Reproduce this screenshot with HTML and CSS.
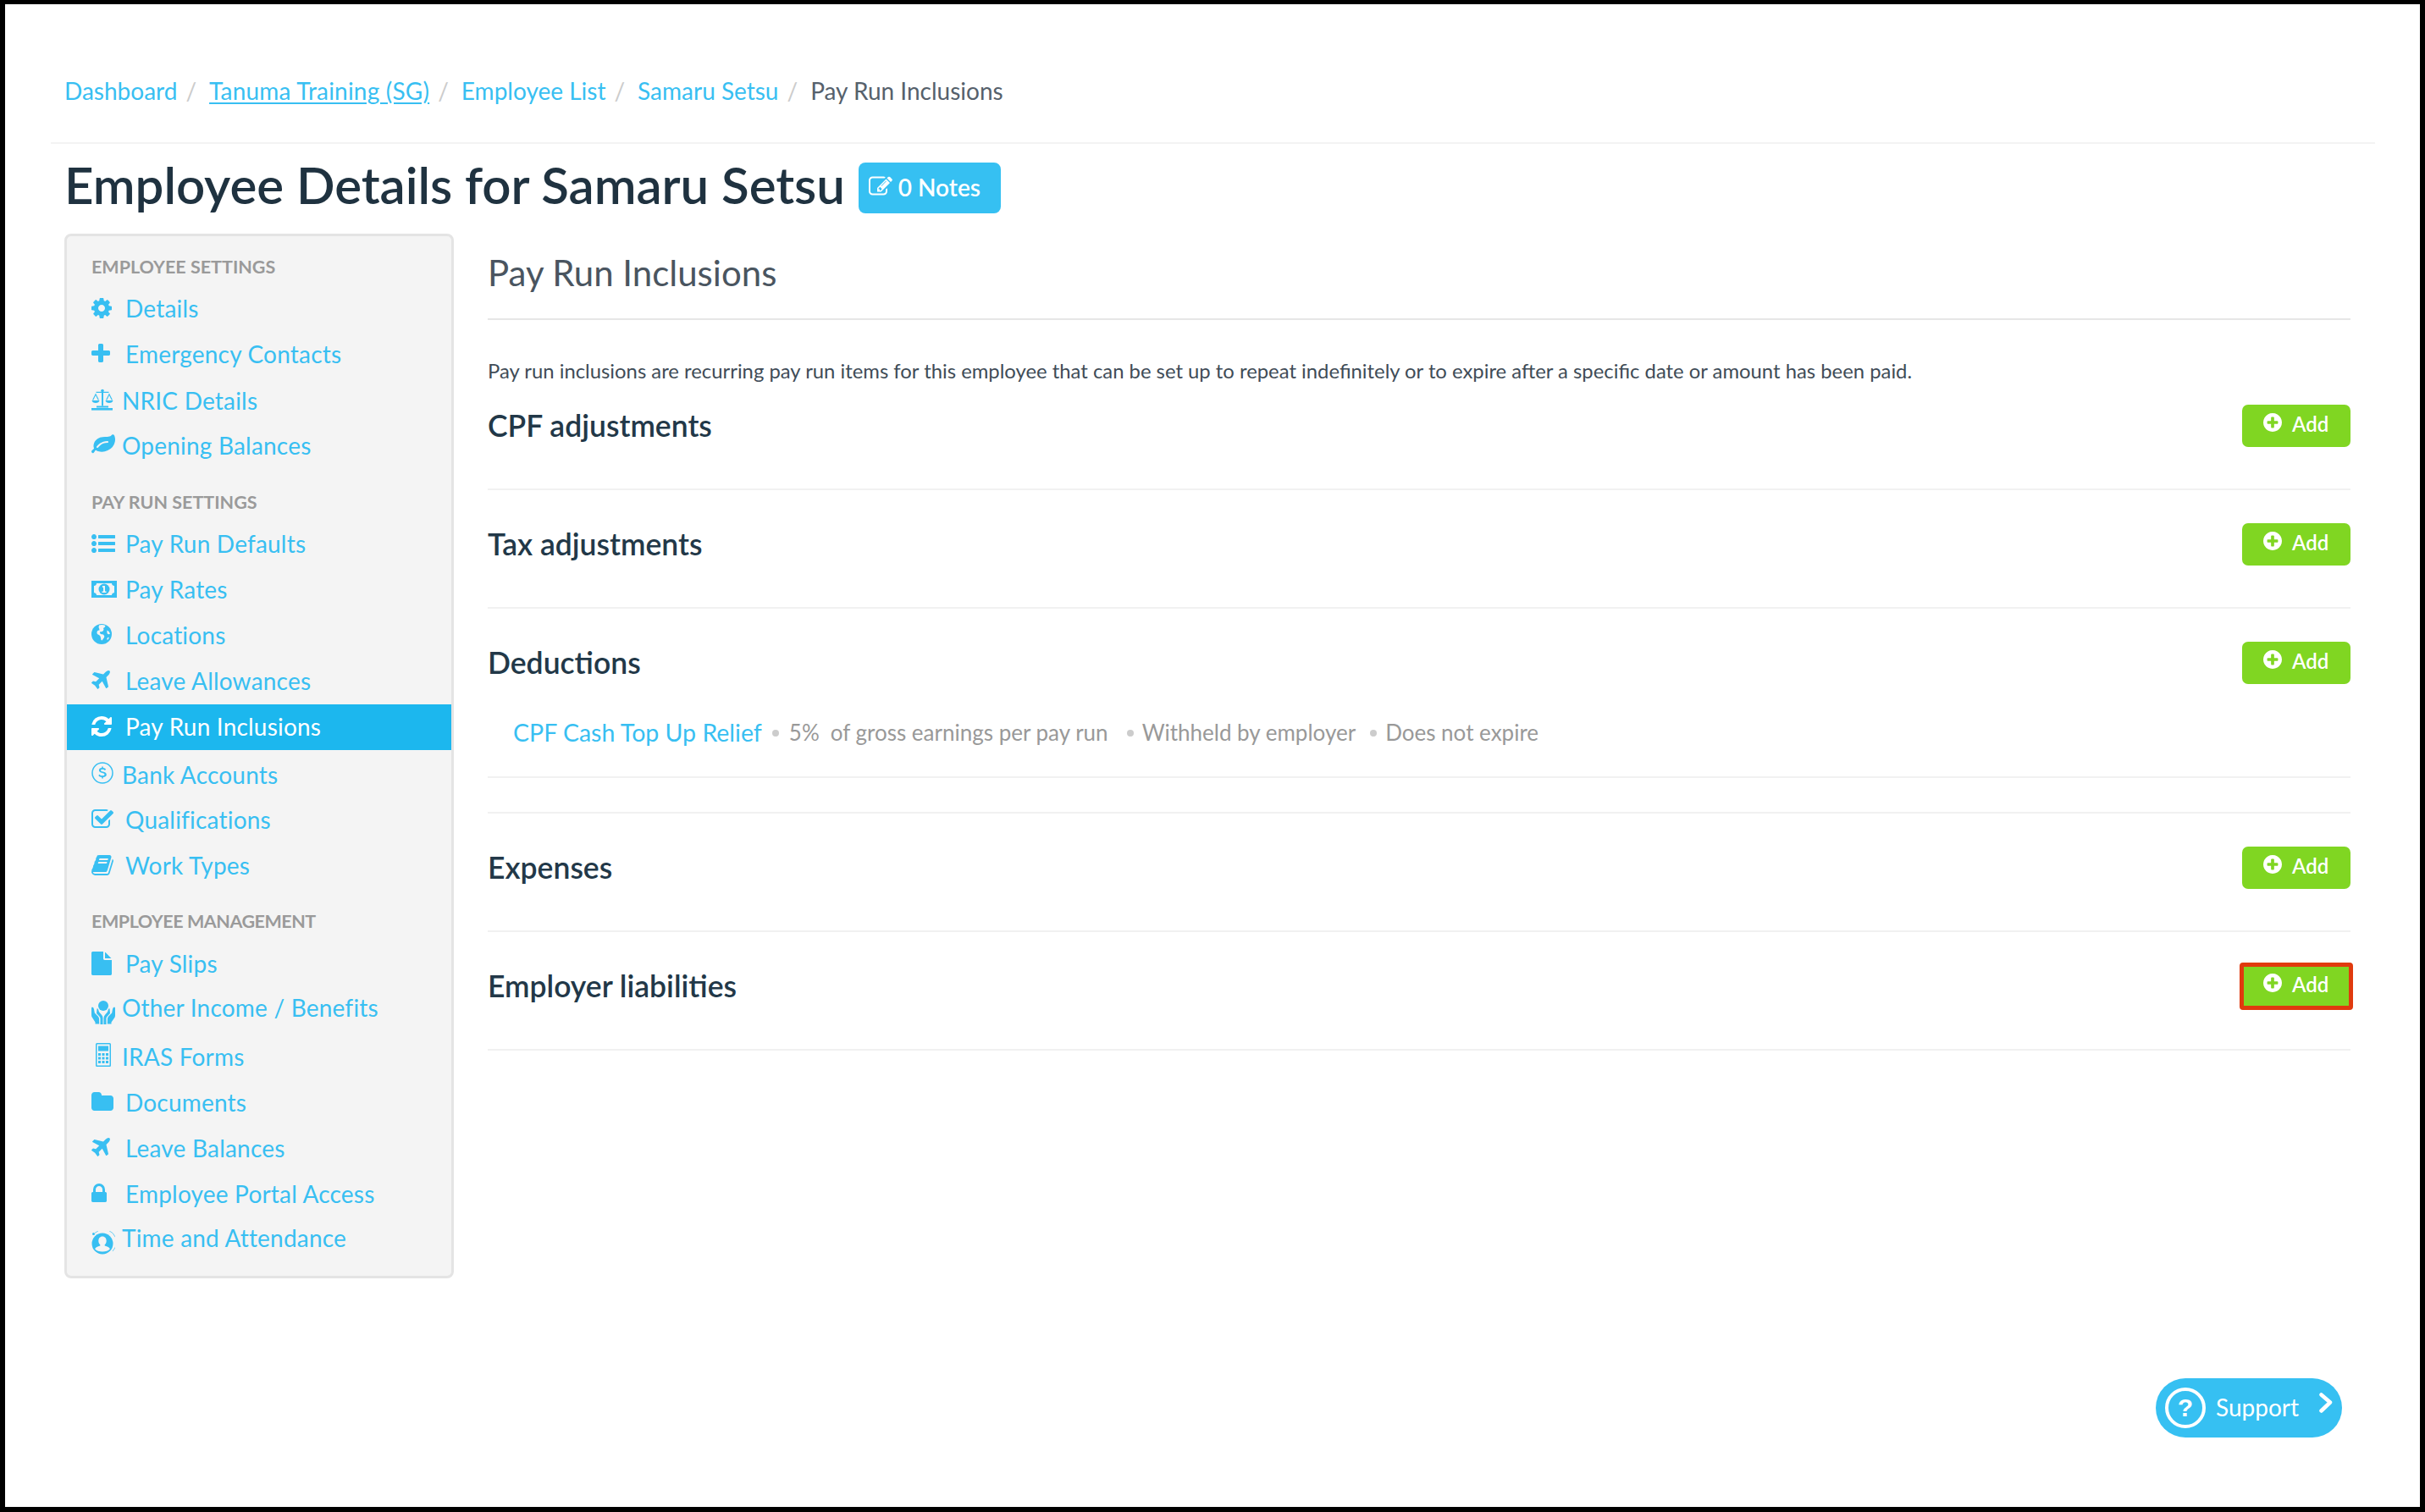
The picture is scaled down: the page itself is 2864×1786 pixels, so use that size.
FILE: index.html
```html
<!DOCTYPE html>
<html lang="en">
<head>
<meta charset="utf-8">
<title>Employee Details for Samaru Setsu</title>
<link rel="stylesheet" href="styles.css">
</head>
<body>
<svg class="sprites" xmlns="http://www.w3.org/2000/svg">
  <symbol id="i-cog" viewBox="128 128 1536 1536"><path d="M1152 896q0-106-75-181t-181-75-181 75-75 181 75 181 181 75 181-75 75-181zm512-109v222q0 12-8 23t-20 13l-185 28q-19 54-39 91 35 50 107 138 10 12 10 25t-9 23q-27 37-99 108t-94 71q-12 0-26-9l-138-108q-44 23-91 38-16 136-29 186-7 28-36 28h-222q-14 0-24.500-8.500t-11.500-21.500l-28-184q-49-16-90-37l-141 107q-10 9-25 9-14 0-25-11-126-114-165-168-7-10-7-23 0-12 8-23 15-21 51-66.500t54-70.500q-27-50-41-99l-183-27q-13-2-21-12.500t-8-23.500v-222q0-12 8-23t19-13l186-28q14-46 39-92-40-57-107-138-10-12-10-24 0-10 9-23 26-36 98.500-107.500t94.500-71.500q13 0 26 10l138 107q44-23 91-38 16-136 29-186 7-28 36-28h222q14 0 24.500 8.500t11.500 21.500l28 184q49 16 90 37l142-107q9-9 24-9 13 0 25 10 129 119 165 170 7 8 7 22 0 12-8 23-15 21-51 66.500t-54 70.500q26 50 41 98l183 28q13 2 21 12.500t8 23.500z"/></symbol>
  <symbol id="i-plus" viewBox="192 128 1408 1408"><path d="M1600 736v192q0 40-28 68t-68 28h-416v416q0 40-28 68t-68 28h-192q-40 0-68-28t-28-68v-416h-416q-40 0-68-28t-28-68v-192q0-40 28-68t68-28h416v-416q0-40 28-68t68-28h192q40 0 68 28t28 68v416h416q40 0 68 28t28 68z"/></symbol>
  <symbol id="i-leaf" viewBox="0 128 1792 1536"><path d="M1280 704q0-26-19-45t-45-19q-172 0-318 49.500t-259.500 134-235.500 219.500q-19 21-19 45 0 26 19 45t45 19q24 0 45-19 27-24 74-71t67-66q137-124 268.500-176t313.500-52q26 0 45-19t19-45zm512-198q0 95-20 193-46 224-184.500 383t-357.500 268q-214 108-438 108-148 0-286-47-15-5-88-42t-96-37q-16 0-39.500 32t-45 70-52.500 76-60 38q-30 0-51-11t-31-24-27-42q-2-4-6-11t-5.500-10-3-9.500-1.500-13.500q0-35 31-73.500t68-65.500 68-56 31-48q0-4-14-38t-16-44q-9-51-9-104 0-115 43.500-220t119-184.500 170.500-139 204-95.500q55-18 145-25.500t179.500-9 178.500-6 163.500-24 113.500-56.500l29.500-29.500 29.500-28 27-20 36.500-16 43.500-4.500q39 0 70.500 46t47.500 112 24 124 8 96z"/></symbol>
  <symbol id="i-list" viewBox="0 192 1792 1408"><path d="M384 1408q0 80-56 136t-136 56-136-56-56-136 56-136 136-56 136 56 56 136zm0-512q0 80-56 136t-136 56-136-56-56-136 56-136 136-56 136 56 56 136zm1408 416v192q0 13-9.500 22.500t-22.500 9.500h-1216q-13 0-22.500-9.500t-9.500-22.500v-192q0-13 9.500-22.500t22.500-9.500h1216q13 0 22.500 9.500t9.500 22.500zm-1408-928q0 80-56 136t-136 56-136-56-56-136 56-136 136-56 136 56 56 136zm1408 416v192q0 13-9.500 22.500t-22.500 9.500h-1216q-13 0-22.500-9.500t-9.500-22.500v-192q0-13 9.500-22.500t22.500-9.500h1216q13 0 22.500 9.500t9.500 22.500zm0-512v192q0 13-9.500 22.500t-22.500 9.500h-1216q-13 0-22.500-9.500t-9.500-22.500v-192q0-13 9.500-22.500t22.500-9.500h1216q13 0 22.500 9.500t9.500 22.500z"/></symbol>
  <symbol id="i-plane" viewBox="0 128 1408 1408"><path d="M1376 160q44 52 12 148t-108 172l-161 161 160 696q5 19-12 33l-128 96q-7 6-19 6-4 0-7-1-15-3-21-16l-279-508-259 259 53 194q5 17-8 31l-96 96q-9 9-23 9h-2q-15-2-24-13l-189-252-252-189q-11-7-13-23-1-13 9-25l96-97q9-9 23-9 6 0 8 1l194 53 259-259-508-279q-14-8-17-24-2-16 9-27l128-128q14-13 30-8l665 159 160-160q76-76 172-108t148 12z"/></symbol>
  <symbol id="i-refresh" viewBox="128 128 1536 1536"><path d="M1639 1056q0 5-1 7-64 268-268 434.500t-478 166.500q-146 0-282.500-55t-243.500-157l-129 129q-19 19-45 19t-45-19-19-45v-448q0-26 19-45t45-19h448q26 0 45 19t19 45-19 45l-137 137q71 66 161 102t187 36q134 0 250-65t186-179q11-17 53-117 8-23 30-23h192q13 0 22.500 9.500t9.500 22.500zm25-800v448q0 26-19 45t-45 19h-448q-26 0-45-19t-19-45 19-45l138-138q-148-137-349-137-134 0-250 65t-186 179q-11 17-53 117-8 23-30 23h-199q-13 0-22.500-9.500t-9.500-22.500v-7q65-268 270-434.500t480-166.500q146 0 284 55.500t245 156.500l130-129q19-19 45-19t45 19 19 45z"/></symbol>
  <symbol id="i-check" viewBox="64 128 1664 1408"><path d="M1472 930v318q0 119-84.500 203.500t-203.500 84.500h-832q-119 0-203.500-84.500t-84.500-203.500v-832q0-119 84.500-203.500t203.500-84.500h832q63 0 117 25 15 7 18 23 3 17-9 29l-49 49q-10 10-23 10-3 0-9-2-23-6-45-6h-832q-66 0-113 47t-47 113v832q0 66 47 113t113 47h832q66 0 113-47t47-113v-254q0-13 9-22l64-64q10-10 23-10 6 0 12 3 20 8 20 29zm231-489l-814 814q-24 24-57 24t-57-24l-430-430q-24-24-24-57t24-57l110-110q24-24 57-24t57 24l263 263 647-647q24-24 57-24t57 24l110 110q24 24 24 57t-24 57z"/></symbol>
  <symbol id="i-book" viewBox="60 128 1672 1536"><path d="M1703 478q40 57 18 129l-275 906q-19 64-76.500 107.500t-122.500 43.500h-923q-77 0-148.500-53.500t-99.500-131.500q-24-67-2-127 0-4 3-27t4-37q1-8-3-21.500t-3-19.500q2-11 8-21t16.500-23.500 16.500-23.500q23-38 45-91.500t30-91.500q3-10 .5-30t-.5-28q3-11 17-28t17-23q21-36 42-92t25-90q1-9-2.500-32t.5-28q4-13 22-30.500t22-22.500q19-26 42.500-84.500t27.500-96.500q1-8-3-25.500t-2-26.500q2-8 9-18t18-23 17-21q8-12 16.500-30.500t15-35 16-36 19.500-32 26.500-23.500 36-11.500 47.500 5.500l-1 3q38-9 51-9h761q74 0 114 56t18 130l-274 906q-36 119-71.500 153.500t-128.500 34.500h-869q-27 0-38 15-11 16-1 43 24 70 144 70h923q29 0 56-15.500t35-41.500l300-987q7-22 5-57 38 15 59 43zm-1064 2q-4 13 2 22.500t20 9.500h608q13 0 25.500-9.500t16.500-22.500l21-64q4-13-2-22.500t-20-9.500h-608q-13 0-25.500 9.500t-16.500 22.500zm-83 256q-4 13 2 22.500t20 9.500h608q13 0 25.500-9.500t16.500-22.500l21-64q4-13-2-22.500t-20-9.500h-608q-13 0-25.500 9.500t-16.500 22.500z"/></symbol>
  <symbol id="i-file" viewBox="0 0 1536 1792"><path d="M1024 512v-472q22 14 36 28l408 408q14 14 28 36h-472zm-128 32q0 40 28 68t68 28h544v1056q0 40-28 68t-68 28h-1344q-40 0-68-28t-28-68v-1600q0-40 28-68t68-28h800v544z"/></symbol>
  <symbol id="i-folder" viewBox="64 128 1664 1408"><path d="M1728 608v704q0 92-66 158t-158 66h-1216q-92 0-158-66t-66-158v-960q0-92 66-158t158-66h320q92 0 158 66t66 158v32h672q92 0 158 66t66 158z"/></symbol>
  <symbol id="i-lock" viewBox="320 128 1152 1408"><path d="M640 768h512v-192q0-106-75-181t-181-75-181 75-75 181v192zm832 96v576q0 40-28 68t-68 28h-960q-40 0-68-28t-28-68v-576q0-40 28-68t68-28h32v-192q0-184 132-316t316-132 316 132 132 316v192h32q40 0 68 28t28 68z"/></symbol>
  <symbol id="i-plus-circle" viewBox="128 128 1536 1536"><path d="M1344 960v-128q0-26-19-45t-45-19h-256v-256q0-26-19-45t-45-19h-128q-26 0-45 19t-19 45v256h-256q-26 0-45 19t-19 45v128q0 26 19 45t45 19h256v256q0 26 19 45t45 19h128q26 0 45-19t19-45v-256h256q26 0 45-19t19-45zm320-64q0 209-103 385.500t-279.500 279.500-385.500 103-385.500-103-279.500-279.500-103-385.500 103-385.500 279.500-279.500 385.500-103 385.500 103 279.500 279.500 103 385.500z"/></symbol>
  <symbol id="i-edit" viewBox="0 128 1792 1408"><path d="M888 1184l116-116-152-152-116 116v56h96v96h56zm440-720q-16-16-33 1l-350 350q-17 17-1 33t33-1l350-350q17-17 1-33zm80 594v190q0 119-84.500 203.500t-203.500 84.500h-832q-119 0-203.500-84.500t-84.500-203.500v-832q0-119 84.500-203.500t203.500-84.500h832q63 0 117 25 15 7 18 23 3 17-9 29l-49 49q-14 14-32 8-23-6-45-6h-832q-66 0-113 47t-47 113v832q0 66 47 113t113 47h832q66 0 113-47t47-113v-126q0-13 9-22l64-64q15-15 35-7t20 29zm-96-738l288 288-672 672h-288v-288zm444 132l-92 92-288-288 92-92q28-28 68-28t68 28l152 152q28 28 28 68t-28 68z"/></symbol>
</svg>

<div class="frame">
  <div class="page">
    <nav class="crumbs">
      <a class="crumb">Dashboard</a><span class="sep">/</span>
      <a class="crumb crumb-u">Tanuma Training (SG)</a><span class="sep">/</span>
      <a class="crumb">Employee List</a><span class="sep">/</span>
      <a class="crumb">Samaru Setsu</a><span class="sep">/</span>
      <span class="crumb-current">Pay Run Inclusions</span>
    </nav>
    <header class="title-row">
      <h1 class="title">Employee Details for Samaru Setsu</h1>
      <a class="notes-btn"><svg class="notes-ic"><use href="#i-edit"/></svg>0 Notes</a>
    </header>
    <div class="columns">
      <aside class="sidebar">
        <h4 class="nav-head">Employee Settings</h4>
        <a class="nav-item"><span class="slot"><svg class="ic w24 h24 up1"><use href="#i-cog"/></svg></span>Details</a>
        <a class="nav-item"><span class="slot"><svg class="ic w22 h22 up3"><use href="#i-plus"/></svg></span>Emergency Contacts</a>
        <a class="nav-item nudge1"><span class="slot slot-n"><svg class="ic w26 h26 up2" viewBox="0 0 26 26"><path d="M12 2h2v1.800h6.500v1.200h-6.500v15.500h-2v-15.500h-6.500v-1.200h6.500z"/><circle cx="13" cy="2.500" r="1.800"/><path d="M1 13.500l4-8 4 8h-1.300l-2.700-5.400-2.700 5.400zM.5 14h9q-.6 3-4.500 3t-4.500-3zM17 13.500l4-8 4 8h-1.300l-2.700-5.400-2.700 5.400zM16.500 14h9q-.6 3-4.500 3t-4.500-3z"/><rect x="6" y="20.500" width="14" height="2"/><rect x="0" y="23" width="25" height="2.600"/></svg></span>NRIC Details</a>
        <a class="nav-item"><span class="slot slot-n"><svg class="ic w28 h24 up2"><use href="#i-leaf"/></svg></span>Opening Balances</a>
        <h4 class="nav-head nav-head-next">Pay Run Settings</h4>
        <a class="nav-item"><span class="slot"><svg class="ic w28 h22 up1"><use href="#i-list"/></svg></span>Pay Run Defaults</a>
        <a class="nav-item"><span class="slot"><svg class="ic w30 h20 up1" viewBox="0 0 30 20"><path fill-rule="evenodd" d="M0 0h30v20H0zM6 3q0 2.500-3 3v8q3 .5 3 3h18q0-2.500 3-3V6q-3-.5-3-3z"/><circle cx="15" cy="10" r="6.500"/><path class="ic-cut" d="M13 6h3v6.500h1.500V14h-5v-1.500H14V8h-1z"/></svg></span>Pay Rates</a>
        <a class="nav-item"><span class="slot"><svg class="ic w24 h24 up2" viewBox="0 0 24 24"><circle cx="12" cy="12" r="12"/><path class="ic-cut" d="M9 1.500q4-1 7.500.5-.5 2.500-2.500 3 1 1.500 0 3t-3.500 1q-1.500 1.500.5 3l3 .5q2 1.500 1 3.500l-2.500 3.500q-1.500-.5-1.500-3t-2-3.500q-3-1-2.500-3.500t3-2q0-2-1-3.500zM18.500 7.500q2.500 1 3.500 4-1 1-2.500.5t-1-4.500zM20 15.500q1 .5.500 1.500l-1.500 2q-1-.5-.5-2z"/></svg></span>Locations</a>
        <a class="nav-item"><span class="slot"><svg class="ic w22 h22 up3"><use href="#i-plane"/></svg></span>Leave Allowances</a>
        <a class="nav-item nav-active"><span class="slot"><svg class="ic w24 h24 up1"><use href="#i-refresh"/></svg></span>Pay Run Inclusions</a>
        <a class="nav-item nav-tall"><span class="slot slot-n"><svg class="ic w26 h26 up5" viewBox="0 0 26 26"><circle cx="13" cy="13" r="12" fill="none" stroke="currentColor" stroke-width="1.500"/><path d="M12.200 5.500h1.600v1.600q2.400.2 3.400 1.700l-1.300 1.200q-1-1.200-2.900-1.200-2 0-2 1.200t2.400 1.600q4.400.8 4.400 3.400 0 2.600-4 3v1.500h-1.600v-1.500q-2.800-.2-4-2l1.300-1.200q1.200 1.500 3.400 1.500 2.700 0 2.700-1.600 0-1.300-2.800-1.800-3.900-.7-3.900-3.200 0-2.300 3.300-2.700z"/></svg></span>Bank Accounts</a>
        <a class="nav-item"><span class="slot"><svg class="ic w26 h22 up2"><use href="#i-check"/></svg></span>Qualifications</a>
        <a class="nav-item"><span class="slot"><svg class="ic w26 h24 up1"><use href="#i-book"/></svg></span>Work Types</a>
        <h4 class="nav-head nav-head-mgmt">Employee Management</h4>
        <a class="nav-item"><span class="slot"><svg class="ic w24 h28 up1"><use href="#i-file"/></svg></span>Pay Slips</a>
        <a class="nav-item nav-other"><span class="slot slot-n"><svg class="ic w28 h28 down3" viewBox="0 0 28 28"><circle cx="14" cy="6" r="6"/><path d="M1 7.500q1.500 0 2 2.500l.8 4.500 4 4q1 1 1.200 2.500l.2 6.500H4.500v-2L1 20q-1-1-1-3V9q0-1.500 1-1.500zM27 7.500q-1.500 0-2 2.500l-.8 4.500-4 4q-1 1-1.200 2.500l-.2 6.500h4.700v-2l3.500-5q1-1 1-3V9q0-1.500-1-1.500z"/><path d="M6.500 9.500q1-.5 1.500.8l1 3 3 3.500q1.500 1.700 1.500 4V28h-3v-7q0-1.500-1.200-2.500L6 15z"/><path d="M21.500 9.500q-1-.5-1.500.8l-1 3-3 3.500q-1.500 1.700-1.500 4V28h3v-7q0-1.500 1.200-2.500L22 15z"/></svg></span>Other Income / Benefits</a>
        <a class="nav-item"><span class="slot slot-n"><svg class="ic w18 h28 calc up6" viewBox="0 0 18 28"><path fill-rule="evenodd" d="M1.500 0h15A1.500 1.500 0 0 1 18 1.500v25a1.500 1.500 0 0 1-1.500 1.500h-15A1.500 1.500 0 0 1 0 26.500v-25A1.500 1.500 0 0 1 1.500 0zM1.500 1.500v25h15v-25z"/><path d="M3 3.500h12v6H3zM3 12h3v3H3zM7.500 12h3v3h-3zM12 12h3v3h-3zM3 16.500h3v3H3zM7.500 16.500h3v3h-3zM12 16.500h3v3h-3zM3 21h3v3H3zM7.500 21h3v3h-3zM12 21h3v3h-3z"/></svg></span>IRAS Forms</a>
        <a class="nav-item"><span class="slot"><svg class="ic w26 h22 up2"><use href="#i-folder"/></svg></span>Documents</a>
        <a class="nav-item"><span class="slot"><svg class="ic w22 h22 up3"><use href="#i-plane"/></svg></span>Leave Balances</a>
        <a class="nav-item"><span class="slot"><svg class="ic w18 h22 up2"><use href="#i-lock"/></svg></span>Employee Portal Access</a>
        <a class="nav-item nav-time"><span class="slot slot-n"><svg class="ic w28 h28 down6" viewBox="0 0 28 28"><path d="M4 2.500A14 14 0 0 1 25 24" fill="none" stroke="currentColor" stroke-width=".7"/><circle cx="2.500" cy="3.500" r="1.500"/><circle cx="13" cy="15" r="12.500"/><path class="ic-cut" d="M13 6.500c3 0 4.700 2.300 4.700 5.200 0 2-.9 3.700-2 4.500v1.300q5 1.300 6.200 3.800-3 3.200-8.900 3.200t-8.900-3.200q1.200-2.500 6.200-3.800v-1.300c-1.100-.8-2-2.500-2-4.500 0-2.900 1.700-5.200 4.700-5.200z"/></svg></span>Time and Attendance</a>
      </aside>
      <main class="content">
        <h2 class="content-title">Pay Run Inclusions</h2>
        <p class="intro">Pay run inclusions are recurring pay run items for this employee that can be set up to repeat indefinitely or to expire after a specific date or amount has been paid.</p>

        <section class="section section-first">
          <div class="section-head"><h3 class="section-title">CPF adjustments</h3><a class="add-btn"><svg class="add-ic"><use href="#i-plus-circle"/></svg>Add</a></div>
        </section>
        <section class="section">
          <div class="section-head"><h3 class="section-title">Tax adjustments</h3><a class="add-btn"><svg class="add-ic"><use href="#i-plus-circle"/></svg>Add</a></div>
        </section>
        <section class="section section-list">
          <div class="section-head"><h3 class="section-title">Deductions</h3><a class="add-btn"><svg class="add-ic"><use href="#i-plus-circle"/></svg>Add</a></div>
          <div class="inclusion">
            <a class="inclusion-name">CPF Cash Top Up Relief</a>
            <span class="dot dot-a"></span><span class="meta meta-pct">5%</span><span class="meta">of gross earnings per pay run</span>
            <span class="dot dot-b"></span><span class="meta">Withheld by employer</span>
            <span class="dot dot-c"></span><span class="meta">Does not expire</span>
          </div>
        </section>
        <div class="section-gap"></div>
        <section class="section">
          <div class="section-head"><h3 class="section-title">Expenses</h3><a class="add-btn"><svg class="add-ic"><use href="#i-plus-circle"/></svg>Add</a></div>
        </section>
        <section class="section">
          <div class="section-head"><h3 class="section-title">Employer liabilities</h3><a class="add-btn add-flagged"><svg class="add-ic"><use href="#i-plus-circle"/></svg>Add</a></div>
        </section>
      </main>
    </div>
  </div>
  <a class="support">
    <span class="support-q">?</span>
    <span class="support-label">Support</span>
    <svg class="support-chev" viewBox="0 0 16 24"><path d="M2.500 2.500 13 11.500 2.500 21.500" fill="none" stroke="#fff" stroke-width="4.500" stroke-linecap="round" stroke-linejoin="round"/></svg>
  </a>
</div>
</body>
</html>
```

FILE: styles.css
```css
* { box-sizing: border-box; }
html, body { margin: 0; padding: 0; background: #000; }
body { font-family: Lato, "Open Sans", "Liberation Sans", sans-serif; color: #1f3240; }
a { text-decoration: none; color: #38bff2; }
h1, h2, h3, h4, p { margin: 0; }

.sprites { position: absolute; width: 0; height: 0; overflow: hidden; }

.frame {
  position: relative;
  width: 2864px;
  height: 1786px;
  border-style: solid;
  border-color: #000;
  border-width: 5px 6px 6px 6px;
  background: #fff;
  overflow: hidden;
}
.page { padding: 1px 53px 0 54px; }

/* breadcrumb */
.crumbs {
  display: flex;
  align-items: center;
  height: 164px;
  padding: 82px 0 42px 16px;
  border-bottom: 2px solid #f3f3f3;
  font-size: 28px;
  line-height: 40px;
}
.crumb { color: #38bff2; }
.crumb-u { text-decoration: underline; text-underline-offset: 3px; letter-spacing: .2px; }
.sep { color: #ccc; margin: 0 15px 0 10px; }
.crumb-current { color: #56616c; }

/* title */
.title-row { display: flex; align-items: center; height: 60px; margin: 22px 0 24px 16px; }
.title {
  padding-bottom: 8px;
  font-size: 60px;
  line-height: 60px;
  font-weight: 600;
  letter-spacing: -.05px;
  color: #1f3240;
  white-space: nowrap;
}
.notes-btn {
  display: flex;
  align-items: center;
  height: 60px;
  width: 168px;
  margin-left: 16px;
  padding: 0 0 2px 12px;
  border-radius: 8px;
  background: #36c0f2;
  color: #fff;
  font-size: 28px;
  font-weight: 600;
}
.notes-ic { width: 28px; height: 23px; margin: 0 7px 3px 0; fill: #fff; }

/* layout */
.columns { display: flex; align-items: flex-start; padding-left: 16px; }

/* sidebar */
.sidebar {
  width: 460px;
  flex: none;
  padding: 21px 0 15px;
  background: #f4f4f4;
  border: 3px solid #e4e4e4;
  border-radius: 8px;
}
.nav-head {
  height: 30px;
  margin: 0 0 8px 29px;
  font-size: 21.5px;
  line-height: 30px;
  font-weight: 700;
  color: #9a9a9a;
  text-transform: uppercase;
}
.nav-head-next { margin-top: 24px; }
.nav-head-mgmt { margin-top: 23px; margin-bottom: 9px; letter-spacing: -.45px; }

.nav-item {
  display: flex;
  align-items: center;
  height: 54px;
  padding: 0 0 2px 29px;
  font-size: 28px;
  letter-spacing: .2px;
  color: #38bff2;
  white-space: nowrap;
}
.nav-active { background: #1cb7ee; color: #fff; }
.nudge1 { padding-top: 2px; }
.nav-tall { height: 56px; padding-top: 4px; }
.nav-other { height: 56px; padding-bottom: 8px; }
.nav-time { padding-bottom: 6px; }

.slot { display: flex; align-items: center; flex: none; width: 40px; height: 100%; margin-top: 2px; }
.slot-n { width: 36px; }
.ic { flex: none; fill: currentColor; }
.w18 { width: 18px; } .w22 { width: 22px; } .w24 { width: 24px; } .w26 { width: 26px; }
.w28 { width: 28px; } .w30 { width: 30px; }
.h20 { height: 20px; } .h22 { height: 22px; } .h24 { height: 24px; } .h26 { height: 26px; } .h28 { height: 28px; }
.up1 { margin-bottom: 2px; }
.up2 { margin-bottom: 4px; }
.up3 { margin-bottom: 5px; }
.up5 { margin-bottom: 6px; }
.up6 { margin-bottom: 6px; }
.down3 { margin-top: 10px; }
.down6 { margin-top: 10px; }
.calc { margin-left: 5px; }
.ic-cut { fill: #f4f4f4; }

/* main column */
.content { flex: 1; margin-left: 40px; padding-right: 29px; }
.content-title {
  height: 102px;
  padding-top: 21px;
  border-bottom: 2px solid #e6e6e6;
  font-size: 42px;
  line-height: 50px;
  font-weight: 400;
  color: #4a5560;
}
.intro { margin-top: 45px; font-size: 23.85px; line-height: 30px; color: #3f4c57; white-space: nowrap; }

.section { padding: 39px 0 49px; border-bottom: 2px solid #f1f1f1; }
.section-first { padding-top: 25px; }
.section-list { padding-bottom: 0; }
.section-gap { height: 42px; border-bottom: 2px solid #f1f1f1; }
.section-head { display: flex; align-items: center; justify-content: space-between; height: 50px; }
.section-title { font-size: 35.5px; line-height: 50px; font-weight: 600; color: #223848; }

.add-btn {
  display: flex;
  align-items: center;
  width: 128px;
  height: 50px;
  padding: 0 0 6px 25px;
  border-radius: 7px;
  background: #80d622;
  color: #fff;
  font-size: 24px;
  font-weight: 600;
}
.add-ic { width: 22px; height: 22px; margin: 0 12px 2px 0; fill: #fff; }
.add-flagged { border-radius: 1px; outline: 5px solid #e03a0e; outline-offset: -2px; }

.inclusion {
  display: flex;
  align-items: center;
  height: 109px;
  padding: 5px 0 0 30px;
  font-size: 26px;
  white-space: nowrap;
}
.inclusion-name { color: #38bff2; font-size: 28.5px; }
.meta { color: #999; }
.meta-pct { margin-right: 13px; }
.dot { width: 8px; height: 8px; margin-top: 2px; border-radius: 50%; background: #ccc; }
.dot-a { margin-left: 12px; margin-right: 12px; }
.dot-b { margin-left: 22px; margin-right: 10px; }
.dot-c { margin-left: 17px; margin-right: 10px; }

/* floating support */
.support {
  position: absolute;
  left: 2540px;
  top: 1623px;
  display: flex;
  align-items: center;
  width: 220px;
  height: 70px;
  padding-left: 11px;
  border-radius: 35px;
  background: #36c0f2;
  color: #fff;
}
.support-q {
  display: flex;
  align-items: center;
  justify-content: center;
  width: 48px;
  height: 48px;
  margin-right: 12px;
  border: 4px solid #fff;
  border-radius: 50%;
  font-family: "Liberation Sans", sans-serif;
  font-size: 30px;
  font-weight: 700;
}
.support-label { padding-bottom: 2px; font-size: 28px; line-height: 40px; }
.support-chev { width: 16px; height: 24px; margin: 0 0 12px 24px; }
```
